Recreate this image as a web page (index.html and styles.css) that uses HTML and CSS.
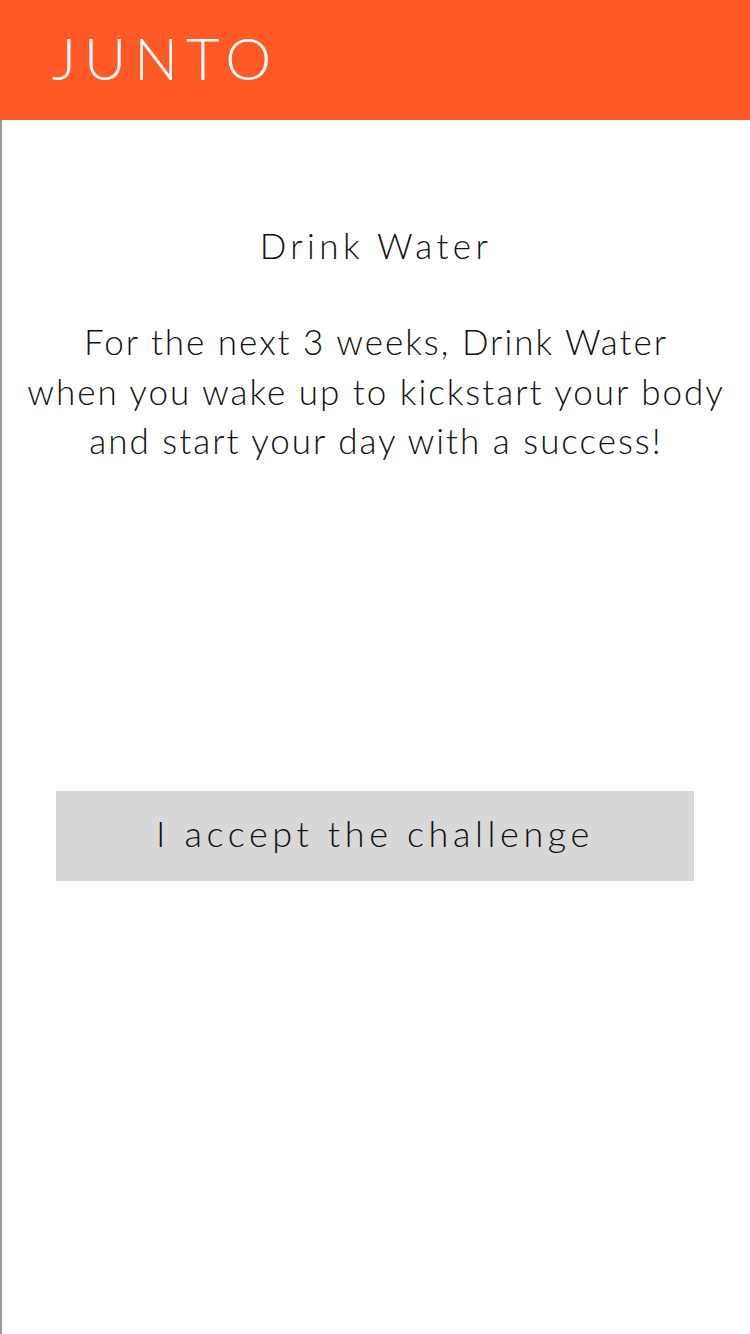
FILE: index.html
```html
<!DOCTYPE html>
<html>
<head>
<meta charset="utf-8">
<link rel="stylesheet" href="styles.css">
</head>
<body>
<header class="topbar"><span class="brand">JUNTO</span></header>
<main class="content">
  <h1 class="title">Drink Water</h1>
  <p class="desc">For the next 3 weeks, Drink Water<br>when you wake up to kickstart your body<br>and start your day with a success!</p>
  <div class="action"><button class="accept">I accept the challenge</button></div>
</main>
</body>
</html>
```
FILE: styles.css
```css
html, body { margin: 0; padding: 0; }
body {
  width: 750px;
  height: 1334px;
  background: #fff;
  font-family: Lato, "Open Sans", sans-serif;
  font-weight: 300;
  color: #111;
  display: flex;
  flex-direction: column;
  overflow: hidden;
}
.topbar {
  height: 120px;
  background: #FF5A25;
  display: flex;
  align-items: center;
  padding-left: 52px;
  box-sizing: border-box;
}
.brand {
  color: #fff;
  font-size: 58px;
  font-weight: 300;
  letter-spacing: 8px;
  line-height: 1;
  margin-top: -4px;
}
.content {
  flex: 1;
  border-left: 2px solid #9a9a9a;
  display: flex;
  flex-direction: column;
  align-items: center;
  text-align: center;
}
.title {
  margin: 103px 0 0;
  font-size: 35px;
  font-weight: 300;
  letter-spacing: 4.4px;
  line-height: 44px;
}
.desc {
  margin: 50px 0 0;
  font-size: 35px;
  letter-spacing: 2px;
  line-height: 49.5px;
}
.action {
  margin-top: 325px;
  width: 638px;
  margin-left: -2px;
}
.accept {
  width: 100%;
  height: 90px;
  border: none;
  background: #d8d8d8;
  font-family: inherit;
  font-weight: 300;
  font-size: 36px;
  letter-spacing: 4.6px;
  color: #111;
  padding: 0 0 6px;
}
```
